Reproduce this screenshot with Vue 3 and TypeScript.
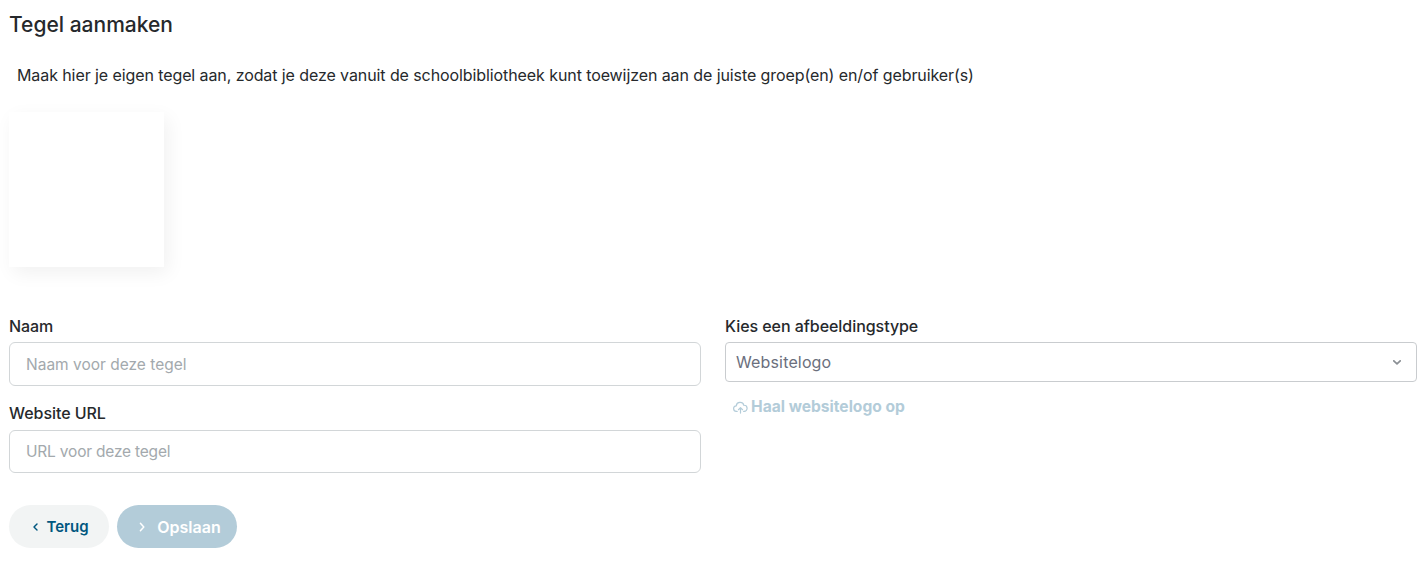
<script setup lang="ts">
const imageType = "Websitelogo";
</script>

<template>
  <div class="page">
    <h1 class="title">Tegel aanmaken</h1>
    <p class="intro">
      Maak hier je eigen tegel aan, zodat je deze vanuit de schoolbibliotheek kunt toewijzen aan de juiste groep(en) en/of gebruiker(s)
    </p>

    <div class="tile"></div>

    <div class="form">
      <div class="col">
        <label class="label">Naam</label>
        <input class="input" type="text" placeholder="Naam voor deze tegel" />
        <label class="label label-url">Website URL</label>
        <input class="input input-url" type="text" placeholder="URL voor deze tegel" />
      </div>
      <div class="col">
        <label class="label">Kies een afbeeldingstype</label>
        <div class="select">
          <span>{{ imageType }}</span>
          <svg width="8" height="5" viewBox="0 0 8 5" fill="none">
            <path d="M.8.8 4 3.8 7.2.8" stroke="#8a8f94" stroke-width="1.7" stroke-linecap="round" stroke-linejoin="round" />
          </svg>
        </div>
        <a class="fetch">
          <svg width="15" height="13" viewBox="0 0 16 14" fill="none">
            <path d="M4.4 11.2H3.8A3 3 0 0 1 3.4 5.2 4.2 4.2 0 0 1 11.6 4.6 3.3 3.3 0 0 1 12 11.2H11.4" stroke="#b3ccd9" stroke-width="1.3" stroke-linecap="round" stroke-linejoin="round" />
            <path d="M8 13V7.4M5.8 9.4 8 7.2l2.2 2.2" stroke="#b3ccd9" stroke-width="1.3" stroke-linecap="round" stroke-linejoin="round" />
          </svg>
          Haal websitelogo op
        </a>
      </div>
    </div>

    <div class="actions">
      <button class="btn btn-back">
        <svg width="5" height="8" viewBox="0 0 5 8" fill="none">
          <path d="M4 .9 1 4l3 3.1" stroke="#00577f" stroke-width="1.4" stroke-linecap="round" stroke-linejoin="round" />
        </svg>
        Terug
      </button>
      <button class="btn btn-save">
        <svg width="6" height="10" viewBox="0 0 6 10" fill="none">
          <path d="M1.4 1.2 4.8 5 1.4 8.8" stroke="#ffffff" stroke-width="1.5" stroke-linecap="round" stroke-linejoin="round" />
        </svg>
        Opslaan
      </button>
    </div>
  </div>
</template>

<style scoped>
.page {
  box-sizing: border-box;
  width: 1427px;
  padding: 13px 10px 0 9px;
  font-family: Inter, "Liberation Sans", sans-serif;
  color: #26292c;
}

.title {
  margin: 0;
  font-size: 21px;
  line-height: 23px;
  font-weight: 500;
}

.intro {
  margin: 29px 0 0 8px;
  font-size: 16px;
  line-height: 21px;
  font-weight: 400;
  letter-spacing: -0.09px;
}

.tile {
  width: 155px;
  height: 155px;
  margin-top: 26px;
  background: #fff;
  box-shadow: 4px 6px 18px rgba(0, 0, 0, 0.06);
}

.form {
  display: grid;
  grid-template-columns: 1fr 1fr;
  gap: 24px;
  margin-top: 50px;
}

.col {
  display: flex;
  flex-direction: column;
  align-items: stretch;
}

.label {
  font-size: 16px;
  line-height: 18px;
  font-weight: 500;
  letter-spacing: -0.05px;
  margin-bottom: 7px;
}

.label-url {
  margin-top: 18px;
  margin-bottom: 8px;
}

.input {
  box-sizing: border-box;
  height: 44px;
  padding: 0 16px;
  border: 1px solid #d2d6d8;
  border-radius: 6px;
  background: #fff;
  font: inherit;
  font-size: 15.5px;
  outline: none;
}

.input-url {
  height: 43px;
  letter-spacing: -0.2px;
}

.input::placeholder {
  color: #a3a9ad;
  opacity: 1;
}

.select {
  box-sizing: border-box;
  display: flex;
  align-items: center;
  justify-content: space-between;
  height: 40px;
  padding: 0 15px 0 10px;
  border: 1px solid #c9cccf;
  border-radius: 4px;
  font-size: 16px;
  letter-spacing: 0.15px;
  color: #6b6f7d;
}

.fetch {
  display: flex;
  align-items: center;
  gap: 3px;
  margin: 15px 0 0 8px;
  font-size: 15.6px;
  line-height: 20px;
  font-weight: 700;
  color: #b3ccd9;
}

.actions {
  display: flex;
  gap: 8px;
  margin-top: 32px;
}

.btn {
  display: flex;
  align-items: center;
  justify-content: center;
  height: 43px;
  padding: 0;
  border: none;
  border-radius: 22px;
  font: inherit;
  font-size: 16px;
  font-weight: 600;
}

.btn-back {
  width: 100px;
  gap: 8px;
  padding-left: 4px;
  font-size: 15px;
  background: #f2f4f4;
  color: #00577f;
}

.btn-save {
  width: 120px;
  gap: 12px;
  padding-left: 6px;
  background: #b3ccd9;
  color: #fff;
}
</style>
